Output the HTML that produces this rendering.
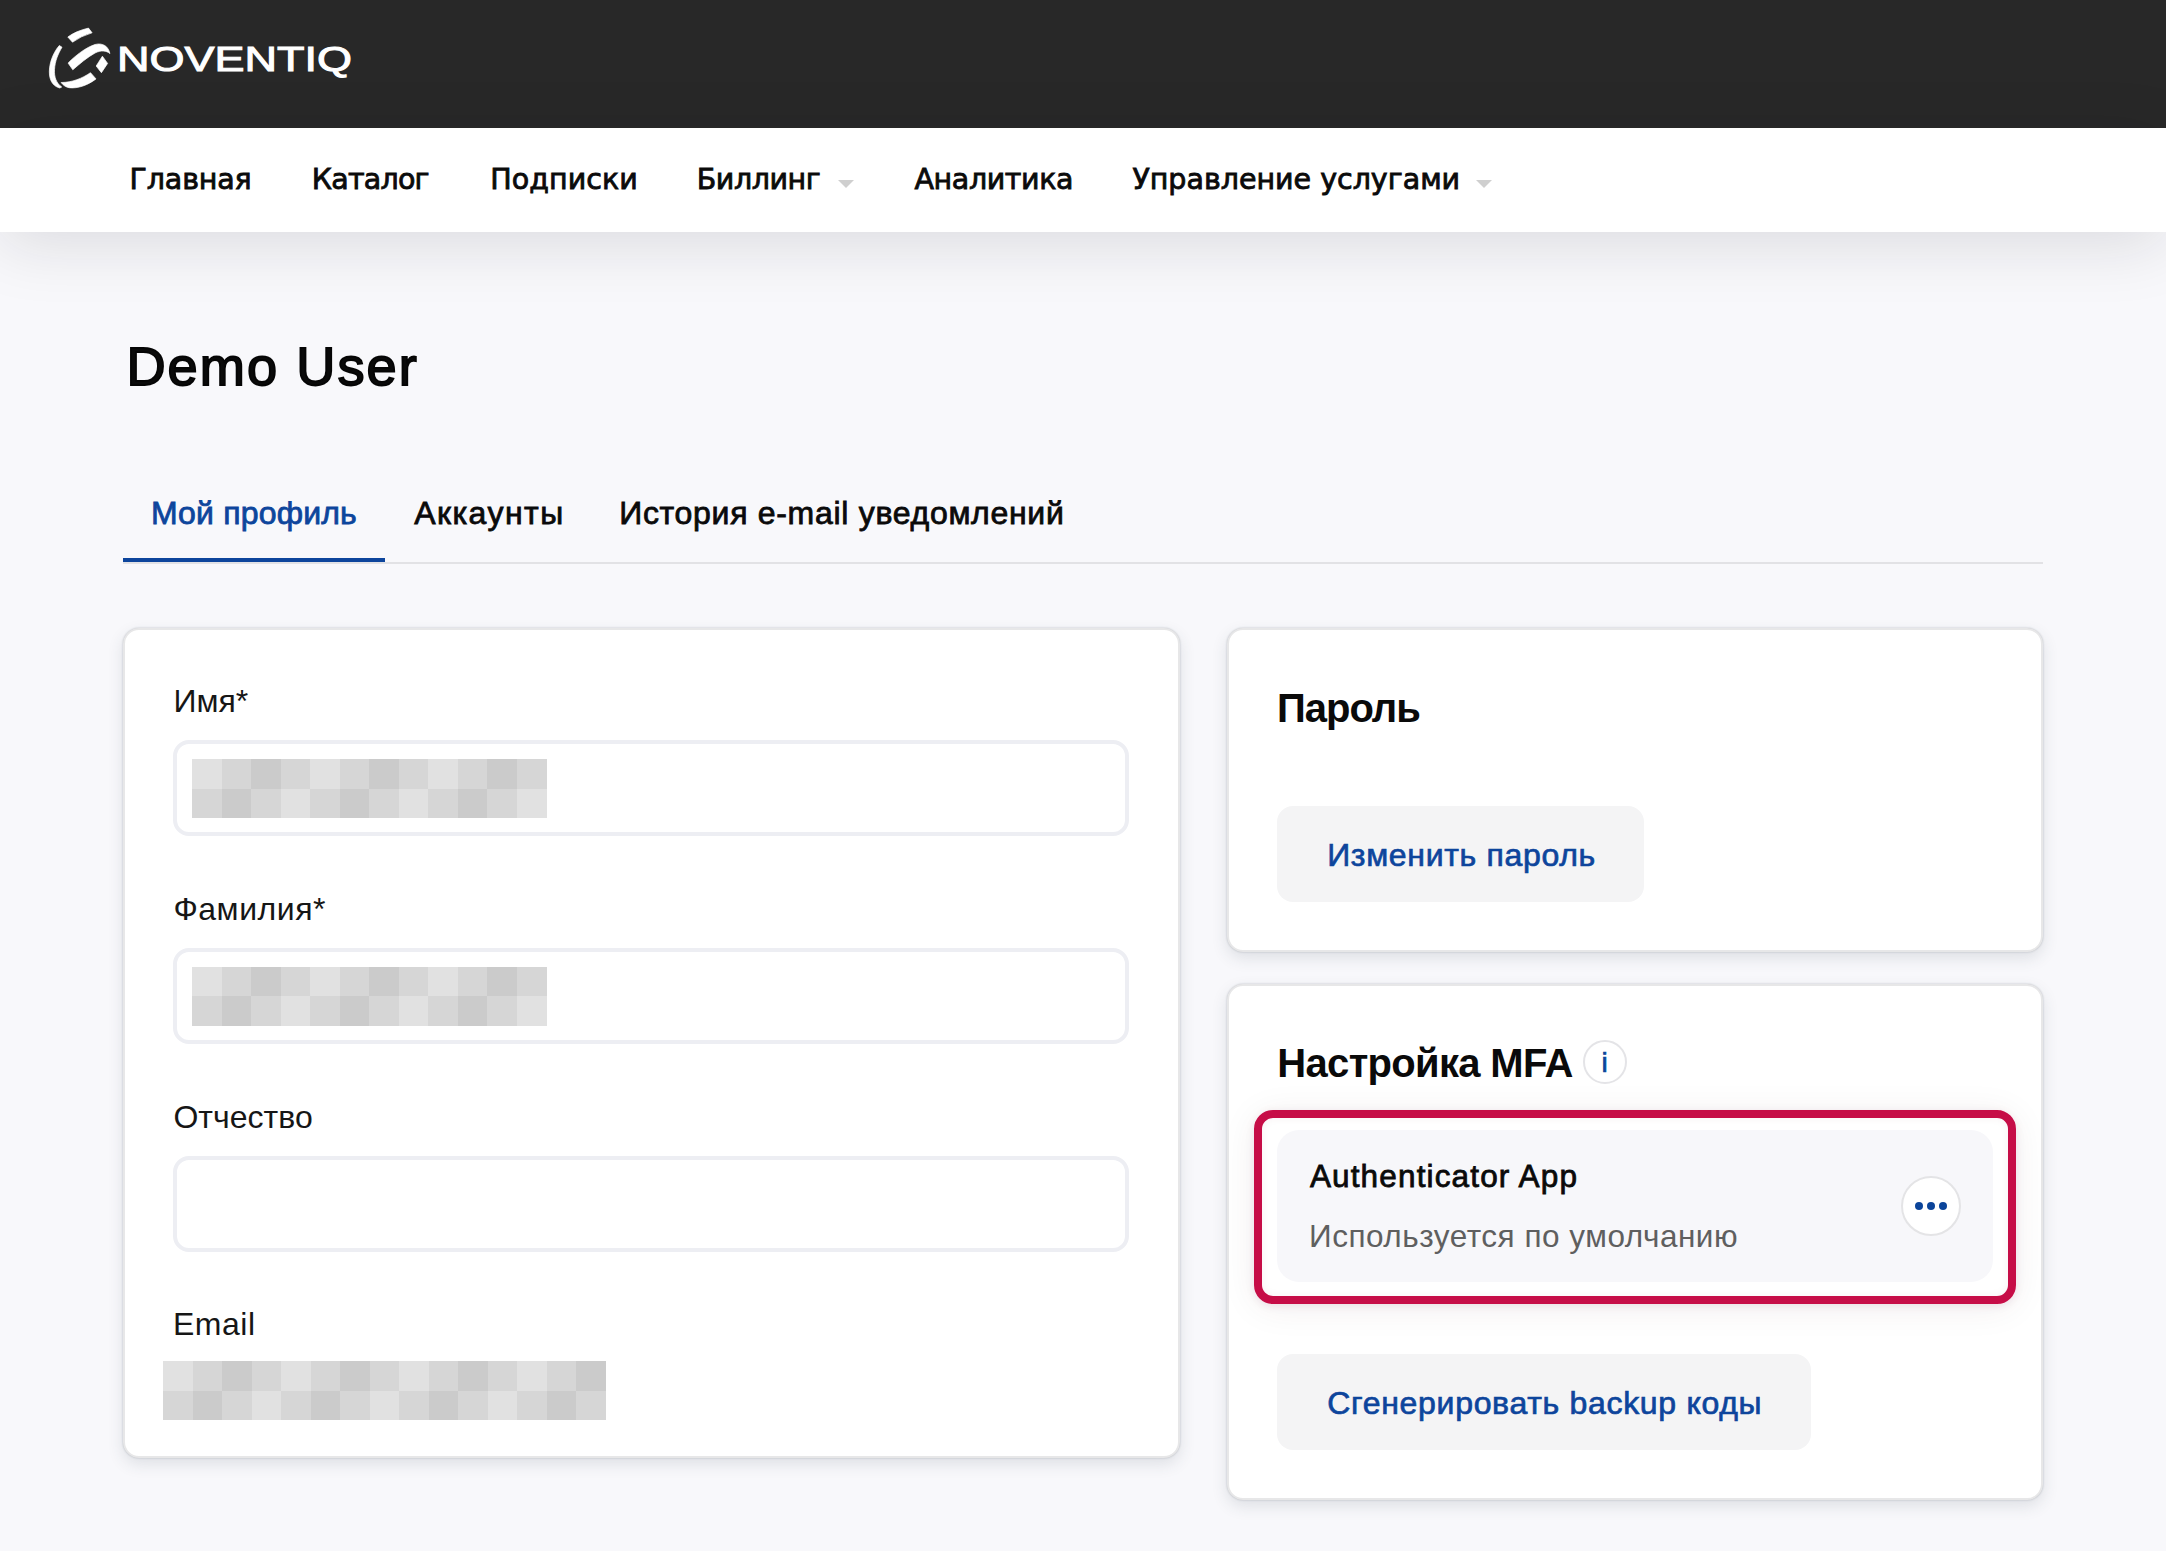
<!DOCTYPE html>
<html lang="ru">
<head>
<meta charset="utf-8">
<title>Demo User</title>
<style>
html,body{margin:0;padding:0}
body{width:2166px;height:1551px;position:relative;overflow:hidden;background:#f8f8fb;font-family:"Liberation Sans",sans-serif}
.tx{position:absolute;white-space:nowrap;line-height:1}
.abs{position:absolute}
#hdr{left:0;top:0;width:2166px;height:128px;background:#282828}
#nav{left:0;top:128px;width:2166px;height:104px;background:#fff;box-shadow:0 12px 64px rgba(20,20,30,.125)}
.card{position:absolute;background:#fff;border:2px solid #e7e7e8;border-radius:16px;box-sizing:border-box;box-shadow:0 0 2px rgba(50,60,75,.3),0 6px 16px rgba(50,60,75,.13)}
.inp{position:absolute;box-sizing:border-box;border:4px solid #edeef3;border-radius:16px;background:#fff}
.btn{position:absolute;background:#f4f4f5;border-radius:16px}
.px i{position:absolute;display:block}
.caret{position:absolute;width:0;height:0;border-left:8px solid transparent;border-right:8px solid transparent;border-top:8px solid #cfcfcf}
</style>
</head>
<body>
<div id="hdr" class="abs"></div>
<div id="nav" class="abs"></div>
<svg class="abs" style="left:40px;top:18px" width="330" height="80" viewBox="40 18 330 80">
<g fill="#fff" stroke="#fff" stroke-width="0.7" stroke-linejoin="round">
<path d="M67.8 37 Q76 31 88.5 28.1 L92.1 32.8 Q81 36 72.5 42.2 Z"/>
<path d="M68.1 63.1 C76 55 86 47.5 95 44.5 C103 42.5 108.5 46.5 109.9 53.6 C106.5 50.5 101 50 95 53 C87 57.5 80 63.5 72.8 69.8 Z"/>
<path d="M59.3 45.5 C52 54 48.5 66 49.5 75 C50.3 82 54 86.5 59.8 88 L61.7 87 C56.5 83.5 54 77 54.5 69.5 C55 61 58 54 62 47.2 Z"/>
<path d="M61.1 82.5 C72 82.5 82 78.5 90.5 72.7 L96 78.9 C88 85 78 88.8 69 87.7 C65.5 87 63 85 61.1 82.5 Z"/>
<path d="M102.4 56.2 L107.6 63.4 L101.4 72.7 L96.2 66 Z"/>
</g>
<text x="117" y="71" fill="#fff" font-family="'Liberation Sans', sans-serif" font-size="35.6" textLength="235" lengthAdjust="spacingAndGlyphs" stroke="#fff" stroke-width="1">NOVENTIQ</text>
</svg>
<div class="caret" style="left:838px;top:180px"></div>
<div class="caret" style="left:1475.5px;top:180px"></div>

<div class="abs" style="left:123px;top:562px;width:1920px;height:2px;background:#e2e2e5"></div>
<div class="abs" style="left:123px;top:558px;width:262px;height:4px;background:#0d459c"></div>

<div class="card" style="left:123px;top:628px;width:1056.5px;height:830px"></div>
<div class="inp" style="left:173px;top:740px;width:956px;height:96px"></div>
<div class="inp" style="left:173px;top:948px;width:956px;height:96px"></div>
<div class="inp" style="left:173px;top:1156px;width:956px;height:96px"></div>
<div class="px"><i style="left:192.0px;top:759px;width:30.0px;height:29.5px;background:#e1e1e1"></i><i style="left:192.0px;top:788.5px;width:30.0px;height:29.5px;background:#d6d6d6"></i><i style="left:221.5px;top:759px;width:30.0px;height:29.5px;background:#d6d6d6"></i><i style="left:221.5px;top:788.5px;width:30.0px;height:29.5px;background:#cbcbcb"></i><i style="left:251.0px;top:759px;width:30.0px;height:29.5px;background:#cbcbcb"></i><i style="left:251.0px;top:788.5px;width:30.0px;height:29.5px;background:#d6d6d6"></i><i style="left:280.5px;top:759px;width:30.0px;height:29.5px;background:#d6d6d6"></i><i style="left:280.5px;top:788.5px;width:30.0px;height:29.5px;background:#e1e1e1"></i><i style="left:310.0px;top:759px;width:30.0px;height:29.5px;background:#e1e1e1"></i><i style="left:310.0px;top:788.5px;width:30.0px;height:29.5px;background:#d6d6d6"></i><i style="left:339.5px;top:759px;width:30.0px;height:29.5px;background:#d6d6d6"></i><i style="left:339.5px;top:788.5px;width:30.0px;height:29.5px;background:#cbcbcb"></i><i style="left:369.0px;top:759px;width:30.0px;height:29.5px;background:#cbcbcb"></i><i style="left:369.0px;top:788.5px;width:30.0px;height:29.5px;background:#d6d6d6"></i><i style="left:398.5px;top:759px;width:30.0px;height:29.5px;background:#d6d6d6"></i><i style="left:398.5px;top:788.5px;width:30.0px;height:29.5px;background:#e1e1e1"></i><i style="left:428.0px;top:759px;width:30.0px;height:29.5px;background:#e1e1e1"></i><i style="left:428.0px;top:788.5px;width:30.0px;height:29.5px;background:#d6d6d6"></i><i style="left:457.5px;top:759px;width:30.0px;height:29.5px;background:#d6d6d6"></i><i style="left:457.5px;top:788.5px;width:30.0px;height:29.5px;background:#cbcbcb"></i><i style="left:487.0px;top:759px;width:30.0px;height:29.5px;background:#cbcbcb"></i><i style="left:487.0px;top:788.5px;width:30.0px;height:29.5px;background:#d6d6d6"></i><i style="left:516.5px;top:759px;width:30.0px;height:29.5px;background:#d6d6d6"></i><i style="left:516.5px;top:788.5px;width:30.0px;height:29.5px;background:#e1e1e1"></i><i style="left:192.0px;top:966.5px;width:30.0px;height:29.5px;background:#e1e1e1"></i><i style="left:192.0px;top:996.0px;width:30.0px;height:29.5px;background:#d6d6d6"></i><i style="left:221.5px;top:966.5px;width:30.0px;height:29.5px;background:#d6d6d6"></i><i style="left:221.5px;top:996.0px;width:30.0px;height:29.5px;background:#cbcbcb"></i><i style="left:251.0px;top:966.5px;width:30.0px;height:29.5px;background:#cbcbcb"></i><i style="left:251.0px;top:996.0px;width:30.0px;height:29.5px;background:#d6d6d6"></i><i style="left:280.5px;top:966.5px;width:30.0px;height:29.5px;background:#d6d6d6"></i><i style="left:280.5px;top:996.0px;width:30.0px;height:29.5px;background:#e1e1e1"></i><i style="left:310.0px;top:966.5px;width:30.0px;height:29.5px;background:#e1e1e1"></i><i style="left:310.0px;top:996.0px;width:30.0px;height:29.5px;background:#d6d6d6"></i><i style="left:339.5px;top:966.5px;width:30.0px;height:29.5px;background:#d6d6d6"></i><i style="left:339.5px;top:996.0px;width:30.0px;height:29.5px;background:#cbcbcb"></i><i style="left:369.0px;top:966.5px;width:30.0px;height:29.5px;background:#cbcbcb"></i><i style="left:369.0px;top:996.0px;width:30.0px;height:29.5px;background:#d6d6d6"></i><i style="left:398.5px;top:966.5px;width:30.0px;height:29.5px;background:#d6d6d6"></i><i style="left:398.5px;top:996.0px;width:30.0px;height:29.5px;background:#e1e1e1"></i><i style="left:428.0px;top:966.5px;width:30.0px;height:29.5px;background:#e1e1e1"></i><i style="left:428.0px;top:996.0px;width:30.0px;height:29.5px;background:#d6d6d6"></i><i style="left:457.5px;top:966.5px;width:30.0px;height:29.5px;background:#d6d6d6"></i><i style="left:457.5px;top:996.0px;width:30.0px;height:29.5px;background:#cbcbcb"></i><i style="left:487.0px;top:966.5px;width:30.0px;height:29.5px;background:#cbcbcb"></i><i style="left:487.0px;top:996.0px;width:30.0px;height:29.5px;background:#d6d6d6"></i><i style="left:516.5px;top:966.5px;width:30.0px;height:29.5px;background:#d6d6d6"></i><i style="left:516.5px;top:996.0px;width:30.0px;height:29.5px;background:#e1e1e1"></i><i style="left:163.0px;top:1361px;width:30.0px;height:29.5px;background:#e1e1e1"></i><i style="left:163.0px;top:1390.5px;width:30.0px;height:29.5px;background:#d6d6d6"></i><i style="left:192.5px;top:1361px;width:30.0px;height:29.5px;background:#d6d6d6"></i><i style="left:192.5px;top:1390.5px;width:30.0px;height:29.5px;background:#cbcbcb"></i><i style="left:222.0px;top:1361px;width:30.0px;height:29.5px;background:#cbcbcb"></i><i style="left:222.0px;top:1390.5px;width:30.0px;height:29.5px;background:#d6d6d6"></i><i style="left:251.5px;top:1361px;width:30.0px;height:29.5px;background:#d6d6d6"></i><i style="left:251.5px;top:1390.5px;width:30.0px;height:29.5px;background:#e1e1e1"></i><i style="left:281.0px;top:1361px;width:30.0px;height:29.5px;background:#e1e1e1"></i><i style="left:281.0px;top:1390.5px;width:30.0px;height:29.5px;background:#d6d6d6"></i><i style="left:310.5px;top:1361px;width:30.0px;height:29.5px;background:#d6d6d6"></i><i style="left:310.5px;top:1390.5px;width:30.0px;height:29.5px;background:#cbcbcb"></i><i style="left:340.0px;top:1361px;width:30.0px;height:29.5px;background:#cbcbcb"></i><i style="left:340.0px;top:1390.5px;width:30.0px;height:29.5px;background:#d6d6d6"></i><i style="left:369.5px;top:1361px;width:30.0px;height:29.5px;background:#d6d6d6"></i><i style="left:369.5px;top:1390.5px;width:30.0px;height:29.5px;background:#e1e1e1"></i><i style="left:399.0px;top:1361px;width:30.0px;height:29.5px;background:#e1e1e1"></i><i style="left:399.0px;top:1390.5px;width:30.0px;height:29.5px;background:#d6d6d6"></i><i style="left:428.5px;top:1361px;width:30.0px;height:29.5px;background:#d6d6d6"></i><i style="left:428.5px;top:1390.5px;width:30.0px;height:29.5px;background:#cbcbcb"></i><i style="left:458.0px;top:1361px;width:30.0px;height:29.5px;background:#cbcbcb"></i><i style="left:458.0px;top:1390.5px;width:30.0px;height:29.5px;background:#d6d6d6"></i><i style="left:487.5px;top:1361px;width:30.0px;height:29.5px;background:#d6d6d6"></i><i style="left:487.5px;top:1390.5px;width:30.0px;height:29.5px;background:#e1e1e1"></i><i style="left:517.0px;top:1361px;width:30.0px;height:29.5px;background:#e1e1e1"></i><i style="left:517.0px;top:1390.5px;width:30.0px;height:29.5px;background:#d6d6d6"></i><i style="left:546.5px;top:1361px;width:30.0px;height:29.5px;background:#d6d6d6"></i><i style="left:546.5px;top:1390.5px;width:30.0px;height:29.5px;background:#cbcbcb"></i><i style="left:576.0px;top:1361px;width:30.0px;height:29.5px;background:#cbcbcb"></i><i style="left:576.0px;top:1390.5px;width:30.0px;height:29.5px;background:#d6d6d6"></i></div>

<div class="card" style="left:1227px;top:628px;width:816px;height:324px"></div>
<div class="btn" style="left:1277px;top:806px;width:367px;height:96px"></div>

<div class="card" style="left:1227px;top:984px;width:816px;height:516px"></div>
<div class="abs" style="left:1583px;top:1040px;width:44px;height:44px;box-sizing:border-box;border:2px solid #e4e4e7;border-radius:50%;background:#fff"></div>
<span class="tx" style="left:1601.6px;top:1048.6px;font-size:28px;font-weight:400;color:#0d459c;-webkit-text-stroke:0.7px #0d459c">i</span>
<div class="abs" style="left:1254px;top:1110px;width:762px;height:194px;box-sizing:border-box;border:8px solid #c60d47;border-radius:19px;box-shadow:0 4px 36px rgba(70,30,40,.07),0 2px 8px rgba(120,20,50,.10),inset 0 0 9px rgba(120,20,50,.06)"></div>
<div class="abs" style="left:1277px;top:1130px;width:716px;height:152px;border-radius:22px;background:#f7f7fa"></div>
<div class="abs" style="left:1901px;top:1176px;width:60px;height:60px;box-sizing:border-box;border:2px solid #e4e4e6;border-radius:50%;background:#fff"></div>
<div class="abs" style="left:1915px;top:1202px;width:8px;height:8px;border-radius:50%;background:#0b449a"></div>
<div class="abs" style="left:1927px;top:1202px;width:8px;height:8px;border-radius:50%;background:#0b449a"></div>
<div class="abs" style="left:1939px;top:1202px;width:8px;height:8px;border-radius:50%;background:#0b449a"></div>
<div class="btn" style="left:1277px;top:1354px;width:534px;height:96px"></div>

<span class="tx" style="left:129.6px;top:165.6px;font-family:'DejaVu Sans', 'Liberation Sans', sans-serif;font-size:28.5px;font-weight:400;letter-spacing:-0.16px;color:#0b0b0b;-webkit-text-stroke:0.85px #0b0b0b;">Главная</span>
<span class="tx" style="left:311.8px;top:165.6px;font-family:'DejaVu Sans', 'Liberation Sans', sans-serif;font-size:28.5px;font-weight:400;letter-spacing:-0.77px;color:#0b0b0b;-webkit-text-stroke:0.85px #0b0b0b;">Каталог</span>
<span class="tx" style="left:490.3px;top:165.6px;font-family:'DejaVu Sans', 'Liberation Sans', sans-serif;font-size:28.5px;font-weight:400;letter-spacing:0.06px;color:#0b0b0b;-webkit-text-stroke:0.85px #0b0b0b;">Подписки</span>
<span class="tx" style="left:696.7px;top:165.6px;font-family:'DejaVu Sans', 'Liberation Sans', sans-serif;font-size:28.5px;font-weight:400;letter-spacing:-0.43px;color:#0b0b0b;-webkit-text-stroke:0.85px #0b0b0b;">Биллинг</span>
<span class="tx" style="left:914.4px;top:165.6px;font-family:'DejaVu Sans', 'Liberation Sans', sans-serif;font-size:28.5px;font-weight:400;letter-spacing:-0.37px;color:#0b0b0b;-webkit-text-stroke:0.85px #0b0b0b;">Аналитика</span>
<span class="tx" style="left:1132.4px;top:165.6px;font-family:'DejaVu Sans', 'Liberation Sans', sans-serif;font-size:28.5px;font-weight:400;letter-spacing:-0.01px;color:#0b0b0b;-webkit-text-stroke:0.85px #0b0b0b;">Управление услугами</span>
<span class="tx" style="left:126.4px;top:339.3px;font-family:'Liberation Sans', sans-serif;font-size:54.2px;font-weight:400;letter-spacing:2.05px;color:#0a0a0a;-webkit-text-stroke:1.8px #050505;">Demo User</span>
<span class="tx" style="left:150.9px;top:496.6px;font-family:'Liberation Sans', sans-serif;font-size:32px;font-weight:400;letter-spacing:0.18px;color:#0d459c;-webkit-text-stroke:0.8px #0d459c;">Мой профиль</span>
<span class="tx" style="left:414.2px;top:496.6px;font-family:'Liberation Sans', sans-serif;font-size:32px;font-weight:400;letter-spacing:1.45px;color:#0a0a0a;-webkit-text-stroke:0.8px #0a0a0a;">Аккаунты</span>
<span class="tx" style="left:619.2px;top:496.6px;font-family:'Liberation Sans', sans-serif;font-size:32px;font-weight:400;letter-spacing:0.7px;color:#0a0a0a;-webkit-text-stroke:0.8px #0a0a0a;">История e-mail уведомлений</span>
<span class="tx" style="left:173.5px;top:684.9px;font-family:'Liberation Sans', sans-serif;font-size:32px;font-weight:400;letter-spacing:0.0px;color:#161616;">Имя*</span>
<span class="tx" style="left:173.4px;top:892.6px;font-family:'Liberation Sans', sans-serif;font-size:32px;font-weight:400;letter-spacing:0.55px;color:#161616;">Фамилия*</span>
<span class="tx" style="left:173.4px;top:1100.6px;font-family:'Liberation Sans', sans-serif;font-size:32px;font-weight:400;letter-spacing:0.03px;color:#161616;">Отчество</span>
<span class="tx" style="left:173.0px;top:1308.4px;font-family:'Liberation Sans', sans-serif;font-size:32px;font-weight:400;letter-spacing:0.5px;color:#161616;">Email</span>
<span class="tx" style="left:1277.0px;top:687.5px;font-family:'Liberation Sans', sans-serif;font-size:40px;font-weight:700;letter-spacing:-1.0px;color:#0a0a0a;">Пароль</span>
<span class="tx" style="left:1327.2px;top:838.8px;font-family:'Liberation Sans', sans-serif;font-size:32px;font-weight:400;letter-spacing:0.67px;color:#0d459c;-webkit-text-stroke:0.7px #0d459c;">Изменить пароль</span>
<span class="tx" style="left:1277.3px;top:1042.8px;font-family:'Liberation Sans', sans-serif;font-size:40px;font-weight:700;letter-spacing:-0.68px;color:#0a0a0a;">Настройка MFA</span>
<span class="tx" style="left:1309.9px;top:1161.3px;font-family:'Liberation Sans', sans-serif;font-size:31.5px;font-weight:400;letter-spacing:1.15px;color:#0a0a0a;-webkit-text-stroke:0.8px #0a0a0a;">Authenticator App</span>
<span class="tx" style="left:1309.0px;top:1221.3px;font-family:'Liberation Sans', sans-serif;font-size:31.5px;font-weight:400;letter-spacing:0.52px;color:#5f5f5f;">Используется по умолчанию</span>
<span class="tx" style="left:1327.3px;top:1386.8px;font-family:'Liberation Sans', sans-serif;font-size:32px;font-weight:400;letter-spacing:0.69px;color:#0d459c;-webkit-text-stroke:0.7px #0d459c;">Сгенерировать backup коды</span>
</body>
</html>
